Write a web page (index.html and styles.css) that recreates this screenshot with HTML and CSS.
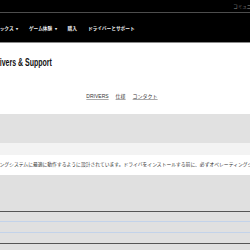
FILE: index.html
```html
<!DOCTYPE html>
<html lang="ja">
<head>
    <meta charset="UTF-8">
    <meta name="viewport" content="width=device-width, initial-scale=1.0">
    <title>Drivers &amp; Support</title>
    <link rel="stylesheet" href="styles.css">
</head>
<body>
    <div class="topbar">
        <span class="util">コミュニティ</span>
    </div>
    <nav class="mainnav">
        <ul>
            <li>グラフィックス <span class="caret">▾</span></li>
            <li>ゲーム体験 <span class="caret">▾</span></li>
            <li>購入</li>
            <li>ドライバーとサポート</li>
        </ul>
    </nav>

    <div class="intro">
        <h1>Drivers &amp; Support</h1>
        <ul class="subnav">
            <li><a href="#">DRIVERS</a></li>
            <li><a href="#">仕様</a></li>
            <li><a href="#">コンタクト</a></li>
        </ul>
    </div>

    <div class="band-dark"></div>
    <div class="band-light"></div>
    <div class="notice">
        <p>オペレーティングシステムに最適に動作するように設計されています。ドライバをインストールする前に、必ずオペレーティングシステムを確認してください。</p>
    </div>

    <div class="panel">
        <div class="table">
            <div class="row"></div>
            <div class="row"></div>
            <div class="row last"></div>
        </div>
    </div>
</body>
</html>
```

FILE: styles.css
```css
html, body {
    margin: 0;
    padding: 0;
    overflow: hidden;
}
body {
    font-family: "Liberation Sans", "Noto Sans CJK JP", sans-serif;
    background: #fff;
    width: 250px;
    height: 250px;
}
ul {
    list-style: none;
    margin: 0;
    padding: 0;
}
.topbar {
    height: 12px;
    background: #000;
    border-bottom: 1px solid #4d4d4d;
    display: flex;
    justify-content: flex-end;
    align-items: center;
    overflow: hidden;
}
.util {
    font-size: 4.5px;
    color: #9a9a9a;
    white-space: nowrap;
    margin-right: -10px;
}
.mainnav {
    height: 29px;
    background: #000;
    border-bottom: 1px solid #8a8a8a;
    display: flex;
    align-items: center;
    overflow: hidden;
}
.mainnav ul {
    display: flex;
    gap: 11px;
    margin-left: -19px;
    margin-top: 1px;
    white-space: nowrap;
}
.mainnav li {
    font-size: 4.7px;
    font-weight: bold;
    color: #f0f0f0;
}
.caret {
    font-size: 4px;
    margin-left: 1px;
}
.intro {
    height: 71px;
    padding-top: 14px;
    box-sizing: border-box;
    overflow: hidden;
}
.intro h1 {
    display: block;
    width: 120px;
    margin: 0 0 0 -8px;
    font-weight: bold;
    font-size: 10px;
    line-height: 12px;
    color: #111;
    white-space: nowrap;
    transform: scaleX(0.7);
    transform-origin: left center;
}
.subnav {
    display: flex;
    justify-content: center;
    gap: 7px;
    margin-top: 20px;
    padding-right: 6px;
    line-height: 8px;
}
.subnav a {
    font-size: 5px;
    color: #333;
    text-decoration: underline;
    text-decoration-color: #aaa;
    text-underline-offset: 1px;
}
.band-dark {
    height: 29px;
    background: #e1e1e1;
}
.band-light {
    height: 12px;
    background: #f3f3f3;
}
.notice {
    height: 20px;
    background: #fff;
    overflow: hidden;
}
.notice p {
    margin: 0 0 0 -29px;
    font-size: 4.8px;
    line-height: 20px;
    color: #333;
    white-space: nowrap;
}
.panel {
    height: 75px;
    background: #e0e0e0;
    padding-top: 36px;
    box-sizing: border-box;
}
.table {
    border-top: 1px solid #555;
}
.row {
    height: 10px;
    border-bottom: 1px solid #c3d3ea;
}
.row:first-child {
    height: 9px;
}
.row.last {
    border-bottom: 1px solid #555;
}
```
